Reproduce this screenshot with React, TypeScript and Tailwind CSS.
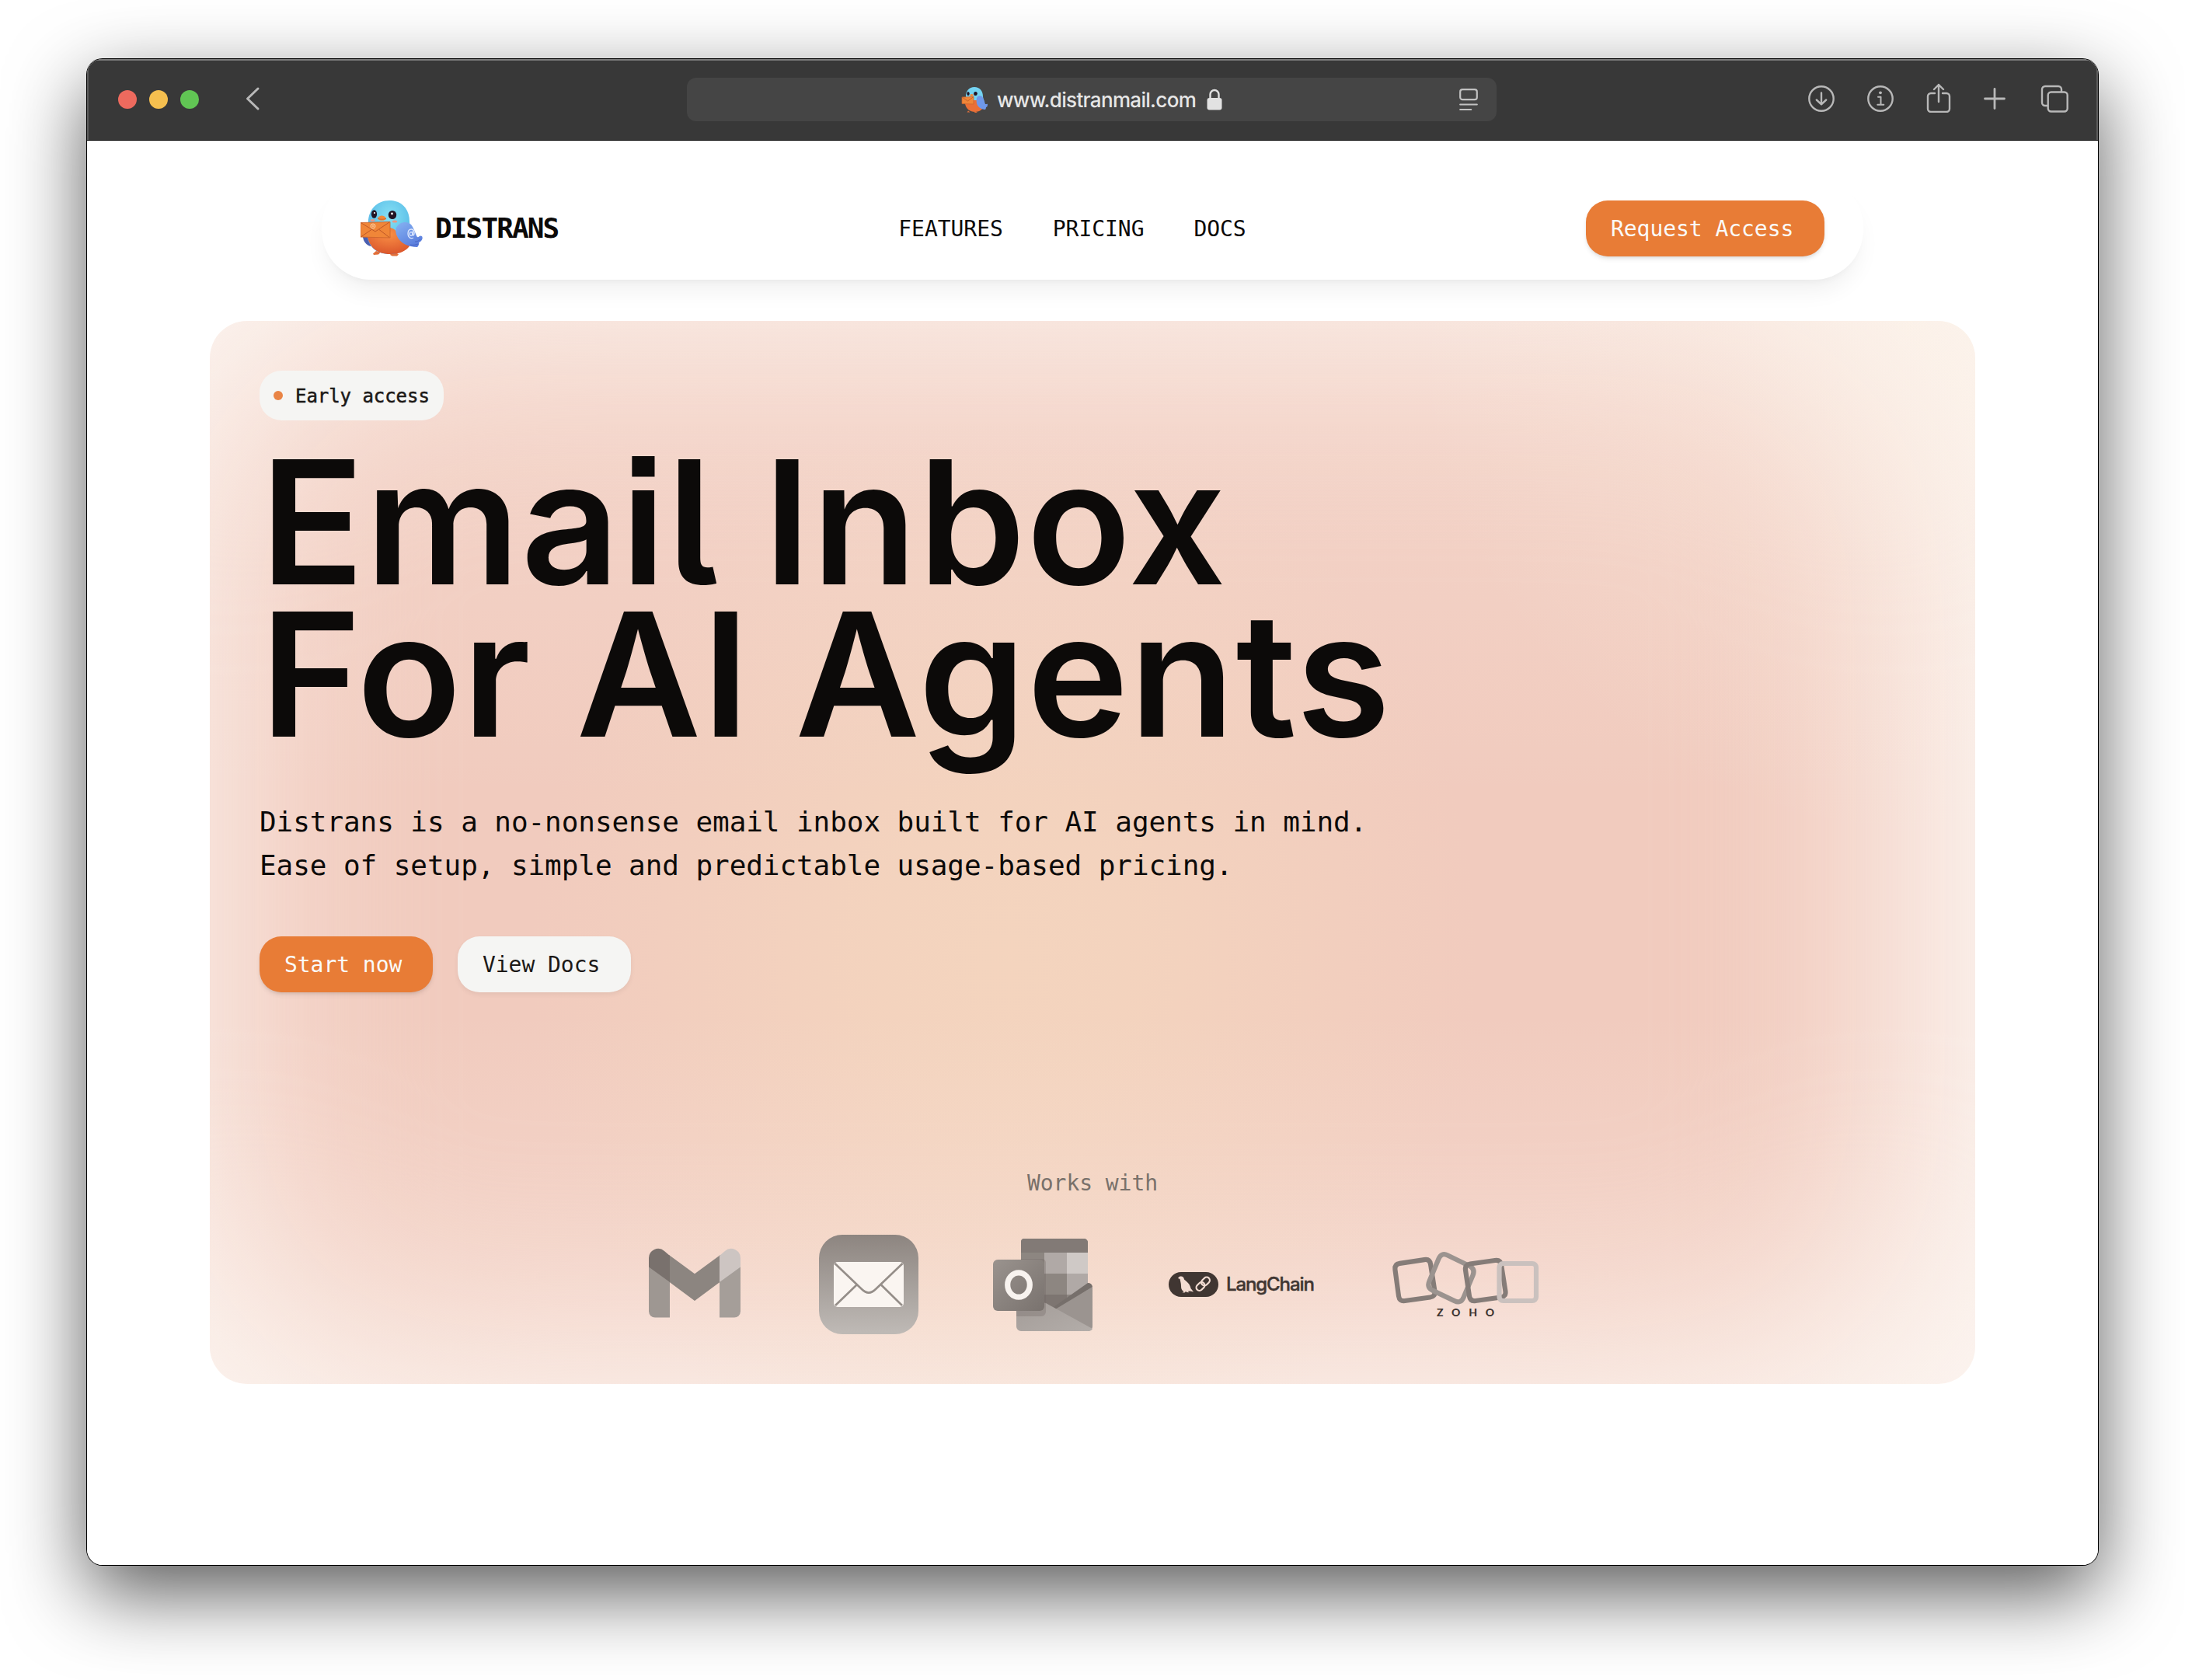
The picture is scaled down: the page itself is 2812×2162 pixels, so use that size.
import React from "react";

const mono = "font-['DejaVu_Sans_Mono',monospace]";

type Point = [number, number];

/** Closed path through the given corners, each rounded by r. */
function roundedPath(points: Point[], r: number) {
  const n = points.length;
  const toward = (a: Point, b: Point): Point => {
    const d = Math.hypot(b[0] - a[0], b[1] - a[1]);
    return [a[0] + ((b[0] - a[0]) * r) / d, a[1] + ((b[1] - a[1]) * r) / d];
  };
  return (
    points
      .map((p, i) => {
        const start = toward(p, points[(i + n - 1) % n]);
        const end = toward(p, points[(i + 1) % n]);
        return `${i === 0 ? "M" : "L"}${start.join(" ")}Q${p.join(" ")} ${end.join(" ")}`;
      })
      .join("") + "Z"
  );
}

function Bird({ className }: { className: string }) {
  return (
    <svg viewBox="0 0 80 72" className={className} fill="none">
      <defs>
        <radialGradient id="birdHead" cx="0.5" cy="0.3" r="0.7">
          <stop offset="0" stopColor="#86e0f4" />
          <stop offset="0.6" stopColor="#62c4ea" />
          <stop offset="1" stopColor="#5a9ce2" />
        </radialGradient>
        <radialGradient id="birdBelly" cx="0.5" cy="0.25" r="0.8">
          <stop offset="0" stopColor="#f98f45" />
          <stop offset="1" stopColor="#d9532a" />
        </radialGradient>
        <linearGradient id="birdWing" x1="0" y1="0" x2="0.6" y2="1">
          <stop offset="0" stopColor="#86b3f2" />
          <stop offset="1" stopColor="#5a7ddd" />
        </linearGradient>
      </defs>
      <path d="M3 47c1 6 4 10 10 12V44z" fill="#4a5fb0" />
      <path d="M20 65l-4 3.500 1 1.500 6-.5 3-3zM40 67l-2 3 3 1.500 6 0 2-2-4-3z" fill="#e2703a" />
      <path d="M37 0C21 0 10 12 10 28c0 9-3 15 0 24 4 11 14 17 28 17 15 0 26-9 28-24 0-4-3-12-3-18C63 11 53 0 37 0z" fill="url(#birdHead)" />
      <path d="M9 46c2 14 13 23 29 23 14 0 22-5 26-12-8-3-15-9-18-17-2-3-4-4-8-5v12z" fill="url(#birdBelly)" />
      <path d="M46 35c4-8 14-9 19-4 4 5 6 13 8 16 2 1 3-3 6-1 2 3-1 7-4 8 1 2-1 5-2 6-11 0-22-5-26-14-2-4-2-8-1-11z" fill="url(#birdWing)" />
      <path d="M64 57c4 1 7 0 10-1M70 53c3 0 5-1 7-3" stroke="#4a66c4" strokeWidth="1" />
      <ellipse cx="17.500" cy="17.500" rx="3.600" ry="5.200" fill="#231424" />
      <ellipse cx="41" cy="18.500" rx="5.200" ry="5.600" fill="#231424" />
      <circle cx="18" cy="16" r="1.100" fill="#fff" />
      <circle cx="40.500" cy="17" r="1.400" fill="#fff" />
      <ellipse cx="15.500" cy="25.500" rx="3" ry="1.600" fill="#e89a86" />
      <ellipse cx="44" cy="27" rx="3.200" ry="1.600" fill="#e89a86" />
      <path d="M22 23c2-4.500 8-5 11 0-1 3.500-9 4-11 0z" fill="#f08a3c" />
      <path d="M22 23.500c4 1 7 1 11 0" stroke="#c65a26" strokeWidth=".8" />
      <path d="M0 28.500l38-1V48L0 47z" fill="#f08638" stroke="#c9622c" strokeWidth=".8" />
      <path d="M1 29l18 11 18-12M1 46.500l13-9M37 47.500L24 37.500" stroke="#bf5726" strokeWidth="1" />
      <circle cx="16" cy="33" r="3" stroke="#fcd2a8" strokeWidth="1" />
      <circle cx="16" cy="33" r="1" stroke="#fcd2a8" strokeWidth=".8" />
      <path d="M68 48c-4 2-7-1-7-5s2-6 4.500-6 4 3 3.500 6c0 2-2 2.500-2 .5v-4" stroke="#dfe9ff" strokeWidth="1.300" />
      <ellipse cx="65" cy="43" rx="1.800" ry="2.300" stroke="#dfe9ff" strokeWidth="1.200" />
    </svg>
  );
}

/** The favicon crops the bird to a narrower, upright shape. */
function Favicon() {
  return (
    <div className="mr-3 h-[34px] w-[34px]">
      <svg viewBox="0 0 34 34" className="size-full" fill="none">
        <path d="M17 1C10 1 6 6 6 13c0 4-1.500 7 0 11 1.500 5 6 8 12 8s11-4 12-10c0-3-2-6-2-9C28 6 24 1 17 1z" fill="#74d3f2" />
        <path d="M5 22c1 7 6 11 13 11 5 0 9-3 11-6-4-2-7-5-8-9H9z" fill="#ea6f36" />
        <path d="M20 15c2-4 7-3 8 0 2 3 2 6 3 8 1 .5 2-1 3 0 0 3-1 4-2 4 0 2-1 3-1 3-6 0-10-4-11-8-.5-3-.5-5 0-7z" fill="#6f98ea" />
        <ellipse cx="9" cy="9.500" rx="1.700" ry="2.500" fill="#231424" />
        <ellipse cx="18.500" cy="9.500" rx="2.300" ry="2.600" fill="#231424" />
        <ellipse cx="13.500" cy="11.500" rx="2.200" ry="1.500" fill="#f08a3c" />
        <path d="M1 14l15-.5V23L1 22.500z" fill="#f08638" stroke="#c9622c" strokeWidth=".7" />
        <path d="M1 14l7.500 5 7.500-5.500" stroke="#bf5726" strokeWidth=".8" />
        <path d="M9 31.500l-1.500 2h4zM18 32l-1 2h4z" fill="#e2703a" />
      </svg>
    </div>
  );
}

function Toolbar() {
  return (
    <header className="relative flex h-[105px] shrink-0 items-center justify-between border-b border-black bg-[#383838] pr-[38px] pl-[40px] shadow-[inset_0_3px_0_-1px_#7a7a7a,inset_2px_0_0_0_#5c5c5c,inset_-2px_0_0_0_#5c5c5c]">
      <div className="flex items-center">
        <div className="flex gap-4">
          <span className="size-6 rounded-full bg-[#ed6a5e]" />
          <span className="size-6 rounded-full bg-[#f5bf4f]" />
          <span className="size-6 rounded-full bg-[#61c554]" />
        </div>
        <svg className="mt-[-2px] ml-[59px] h-8 w-5" viewBox="0 0 20 32" fill="none" stroke="#b8b8b8" strokeWidth="3" strokeLinecap="round" strokeLinejoin="round">
          <path d="M17 3L3.500 16L17 29" />
        </svg>
      </div>
      <div className="absolute top-6 left-[772px] flex h-14 w-[1042px] items-center justify-center rounded-xl bg-[#454545]">
        <Favicon />
        <span className="font-['Inter',sans-serif] text-[26px] font-medium tracking-[-0.680px] text-[#e6e6e6]">www.distranmail.com</span>
        <svg className="ml-[14px] h-7 w-5" viewBox="0 0 20 28" fill="none">
          <path d="M4.500 13V7.500a5.500 5.500 0 0 1 11 0V13" stroke="#e2e2e2" strokeWidth="2.400" />
          <rect x="0.500" y="12" width="19" height="15.500" rx="3" fill="#e2e2e2" />
        </svg>
        <svg className="absolute top-[13px] right-[24px] h-[30px] w-6" viewBox="0 0 24 30" fill="none" stroke="#c2c2c2" strokeWidth="2.200" strokeLinecap="round">
          <rect x="1.200" y="2.200" width="21.600" height="13" rx="3" />
          <path d="M1.200 21.500h21.600M1.200 28h14" />
        </svg>
      </div>
      <div className="mt-[-2px] flex items-center gap-10 text-[#b8b8b8]">
        <svg className="size-9" viewBox="0 0 36 36" fill="none" stroke="currentColor" strokeWidth="2.400" strokeLinecap="round" strokeLinejoin="round">
          <circle cx="18" cy="18" r="15.700" />
          <path d="M18 10.500v14.500M11.800 19.500L18 25.300l6.200-5.800" />
        </svg>
        <svg className="size-9" viewBox="0 0 36 36" fill="none" stroke="currentColor" strokeWidth="2.400" strokeLinecap="round" strokeLinejoin="round">
          <circle cx="18" cy="18" r="15.700" />
          <path d="M15 15.800h3.500v9.700M14.300 25.700h8" strokeWidth="2" />
          <circle cx="18" cy="10.300" r="1.900" fill="currentColor" stroke="none" />
        </svg>
        <svg className="mt-[-2px] ml-px h-[38px] w-8" viewBox="0 0 32 38" fill="none" stroke="currentColor" strokeWidth="2.400" strokeLinecap="round" strokeLinejoin="round">
          <path d="M11 13H6a4 4 0 0 0-4 4v16a4 4 0 0 0 4 4h20a4 4 0 0 0 4-4V17a4 4 0 0 0-4-4h-5M16 24V2M10 8l6-6 6 6" />
        </svg>
        <svg className="size-8" viewBox="0 0 32 32" fill="none" stroke="currentColor" strokeWidth="2.800" strokeLinecap="round">
          <path d="M16 3.500v25M3.500 16h25" />
        </svg>
        <svg className="ml-[3px] size-9" viewBox="0 0 36 36" fill="none" stroke="currentColor" strokeWidth="2.400" strokeLinejoin="round">
          <path d="M9.500 27H6a4 4 0 0 1-4-4V6a4 4 0 0 1 4-4h17a4 4 0 0 1 4 4v3.500" />
          <rect x="9.700" y="9.500" width="25" height="25" rx="4" />
        </svg>
      </div>
    </header>
  );
}

function Gmail() {
  return (
    <svg className="size-32" viewBox="0 0 128 128">
      <path d="M5 38L32 60V106.500H13a8 8 0 0 1-8-8z" fill="#9e9792" />
      <path d="M123 38L96 60V106.500h19a8 8 0 0 0 8-8z" fill="#a59e99" />
      <path d="M31 26L64 50.300L97 26V60.500L64 85L31 60.500z" fill="#8c8580" />
      <path d="M32 27L25 21A12 12 0 0 0 5 30V41.500L32 61z" fill="#79716d" />
      <path d="M96 27L103 21A12 12 0 0 1 123 30V41.500L96 61z" fill="#cdc5c2" />
    </svg>
  );
}

function AppleMail() {
  return (
    <svg className="size-32" viewBox="0 0 128 128">
      <defs>
        <linearGradient id="mailBg" x1="0" y1="0" x2="0" y2="1">
          <stop offset="0" stopColor="#8d8580" />
          <stop offset="1" stopColor="#bfbab6" />
        </linearGradient>
      </defs>
      <rect width="128" height="128" rx="30" fill="url(#mailBg)" />
      <rect x="19" y="35" width="90" height="58" rx="5" fill="#faf5f1" />
      <g fill="none" stroke="#958e89" strokeWidth="2.600">
        <path d="M20.500 37L55 70q9 9 18 0L107.500 37" />
        <path d="M21 91L48.500 64.500M107 91L80 64.500" />
      </g>
    </svg>
  );
}

function Outlook() {
  return (
    <svg className="size-32" viewBox="0 0 128 128">
      <defs>
        <linearGradient id="olTile" x1="0" y1="0" x2="1" y2="1">
          <stop offset="0" stopColor="#9a938e" />
          <stop offset="1" stopColor="#79726e" />
        </linearGradient>
        <linearGradient id="olFlap" x1="0" y1="0" x2="1" y2="1">
          <stop offset="0" stopColor="#a29b97" />
          <stop offset="1" stopColor="#b3ada9" />
        </linearGradient>
      </defs>
      <path d="M40 5h77a5 5 0 0 1 5 5V62l6 6-46 30L36 60V10a5 5 0 0 1 4-5z" fill="#8c8580" />
      <path d="M40 5h77a5 5 0 0 1 5 5v13H36V9a4 4 0 0 1 4-4z" fill="#827a76" />
      <path d="M36 23h30v27H36z" fill="#8d8681" />
      <path d="M66 23h29v27H66z" fill="#b0a9a6" />
      <path d="M95 23h27v27H95z" fill="#cfc9c6" />
      <path d="M66 50h29v27H66z" fill="#8d8681" />
      <path d="M95 50h27v27H95z" fill="#b0a9a6" />
      <path d="M66 77h29v20H66z" fill="#7d7571" />
      <path d="M122 62q5 0 6 5L82 97l-4-4z" fill="#766f6b" />
      <path d="M128 67v51a6 6 0 0 1-6 6L80 96z" fill="#9b9490" />
      <path d="M30 78l38 10 60 33q-1 3-6 3H36a6 6 0 0 1-6-6z" fill="url(#olFlap)" />
      <path d="M36 31h27a5 5 0 0 1 5 5v63a6 6 0 0 1-6 6H30V60z" fill="#6c6561" fillOpacity=".3" />
      <rect y="32" width="66" height="66" rx="6" fill="url(#olTile)" />
      <ellipse cx="33" cy="64.500" rx="14.300" ry="15.700" fill="none" stroke="#f8f3ef" strokeWidth="7.200" />
    </svg>
  );
}

function LangChain() {
  return (
    <div className="flex h-32 w-48 items-center pl-[2px]">
      <svg className="h-8 w-16 shrink-0" viewBox="0 0 64 32">
        <rect width="64" height="32" rx="16" fill="#403632" />
        <path d="M12 8c1-1 1-2.500 4-2.500 2 0 3.500 1 4 4 4 3.500 7.500 6 8.500 11.500l3.500 4.500-4.500-1-3 .2 2 1.500-3-.2-1.500-1-1.500 1.500-3-.3 2-1.200c-3-1.500-3.500-4-3.500-7 0-4-1-6-1.500-9z" fill="#f3dcd2" />
        <g fill="none" stroke="#f3dcd2" strokeWidth="2.200" strokeLinecap="round">
          <rect x="41.500" y="8" width="12" height="8" rx="4" transform="rotate(-45 47.500 12)" />
          <rect x="35" y="14.500" width="12" height="8" rx="4" transform="rotate(-45 41 18.500)" />
        </g>
      </svg>
      <span className="ml-[10px] font-['Inter',sans-serif] text-[24px] leading-8 font-medium tracking-[-1.100px] text-[#403632] [-webkit-text-stroke:0.4px_#403632]">LangChain</span>
    </div>
  );
}

function Zoho() {
  return (
    <svg className="h-32 w-48" viewBox="0 0 192 128">
      <g fill="none" strokeWidth="6.200">
        <path d={roundedPath([[4.500, 38], [50, 31], [57.500, 79.500], [11, 86]], 7)} stroke="#857c78" />
        <path d={roundedPath([[65, 22.500], [109, 44], [90, 89], [46, 68]], 9)} stroke="#9b938f" />
        <path d={roundedPath([[95, 38.500], [141, 32], [148.500, 79.500], [102, 86]], 7)} stroke="#857c78" />
        <rect x="139.500" y="37" width="47.500" height="48" rx="5" stroke="#cac1be" />
      </g>
      <text x="59" y="105" fontFamily="Lato, sans-serif" fontWeight="900" fontSize="14" letterSpacing="10.800" fill="#403632">ZOHO</text>
    </svg>
  );
}

function Hero() {
  return (
    <section className="relative mx-auto mt-[53px] h-[1368px] w-[2272px] overflow-hidden rounded-[48px] bg-[#fdf7f3]">
      <div className="absolute top-[10px] right-[95px] bottom-[10px] left-0 rounded-[260px] bg-[#f1cbbe] blur-[135px]" />
      <div className="absolute inset-0 bg-[radial-gradient(ellipse_27%_52%_at_45%_60%,rgba(245,216,190,0.7)_0%,rgba(245,216,190,0.6)_30%,rgba(245,216,190,0.25)_70%,rgba(245,216,190,0)_100%)]" />
      <div className="absolute inset-0 bg-[radial-gradient(ellipse_32%_50%_at_100%_0%,rgba(252,242,230,0.55)_0%,rgba(252,242,230,0.2)_50%,rgba(252,242,230,0)_100%)]" />
      <div className="absolute inset-0 bg-[linear-gradient(to_bottom,rgba(250,240,234,0.2)_0%,rgba(250,240,234,0.15)_20%,rgba(250,240,234,0)_45%,rgba(250,240,234,0)_65%,rgba(250,240,234,0.35)_100%)]" />
      <div className="relative flex h-full flex-col items-start px-16 pt-16">
        <div className={`${mono} flex h-16 w-[237px] items-center gap-4 rounded-[28px] bg-[#f5f5f3] pl-[18px] text-[24px] tracking-[-0.05px] text-[#1c1917]`}>
          <span className="size-3 rounded-full bg-[#e98445]" />
          <span className="pt-px [-webkit-text-stroke:0.5px_#1c1917]">Early access</span>
        </div>
        <h1 className="mt-[33px] ml-px font-['Inter',sans-serif] text-[221px] leading-[196px] font-semibold tracking-[1.400px] whitespace-nowrap text-[#0c0a09] [font-feature-settings:'cv05','ss07'] [font-variation-settings:'opsz'_14]">
          Email Inbox
          <br />
          For AI Agents
        </h1>
        <p className={`${mono} mt-[64px] text-[36px] leading-[56px] tracking-[-0.080px] whitespace-nowrap text-[#0c0a09]`}>
          Distrans is a no-nonsense email inbox built for AI agents in mind.
          <br />
          Ease of setup, simple and predictable usage-based pricing.
        </p>
        <div className={`${mono} mt-[63px] flex gap-8 text-[28px] tracking-[-0.050px]`}>
          <button className="h-[72px] w-[223px] rounded-[28px] bg-[#e87c36] pt-px pl-8 text-left text-[#fafaf9] shadow-md">Start now</button>
          <button className="h-[72px] w-[223px] rounded-[28px] bg-[#f5f5f3] pt-px pl-8 text-left text-[#1c1917] shadow-[0_3px_6px_rgba(0,0,0,0.06)]">View Docs</button>
        </div>
        <div className="absolute inset-x-0 bottom-16 flex flex-col items-center">
          <p className={`${mono} text-[28px] leading-10 tracking-[-0.050px] text-[#79716b]`}>Works with</p>
          <div className="mt-[46px] flex items-center gap-24">
            <Gmail />
            <AppleMail />
            <Outlook />
            <LangChain />
            <Zoho />
          </div>
        </div>
      </div>
    </section>
  );
}

export default function App() {
  return (
    <div className="flex h-[2162px] w-[2812px] items-start justify-center overflow-hidden bg-white pt-[76px]">
      <div className="relative h-[1938px] w-[2588px] rounded-[20px] shadow-[0_0_0_1px_#000,0_36px_100px_0_rgba(0,0,0,0.65)]">
        <div className="flex h-full flex-col overflow-hidden rounded-[20px] bg-white">
          <Toolbar />
          <main className="flex-1">
            <div className="mx-auto -mb-[53px] w-[2120px] overflow-hidden px-[68px] pt-[47px] pb-[53px]">
              <nav className={`${mono} flex h-[132px] items-center justify-between rounded-[64px] bg-white px-[50px] text-[#0c0a09] shadow-[0_20px_30px_-6px_rgba(0,0,0,0.06),0_8px_12px_-8px_rgba(0,0,0,0.06)]`}>
                <div className="flex w-[630px] items-center gap-4">
                  <Bird className="h-[72px] w-20" />
                  <span className="text-[36px] leading-none font-bold tracking-[-1.880px]">DISTRANS</span>
                </div>
                <div className="flex gap-16 pt-[2px] text-[28px] tracking-[-0.050px]">
                  <a>FEATURES</a>
                  <a>PRICING</a>
                  <a>DOCS</a>
                </div>
                <div className="flex w-[682px] justify-end">
                  <button className="h-[72px] w-[307px] rounded-[28px] bg-[#e87c36] pt-px pl-8 text-left text-[28px] tracking-[-0.050px] text-[#fafaf9] shadow-md">Request Access</button>
                </div>
              </nav>
            </div>
            <Hero />
          </main>
        </div>
      </div>
    </div>
  );
}
